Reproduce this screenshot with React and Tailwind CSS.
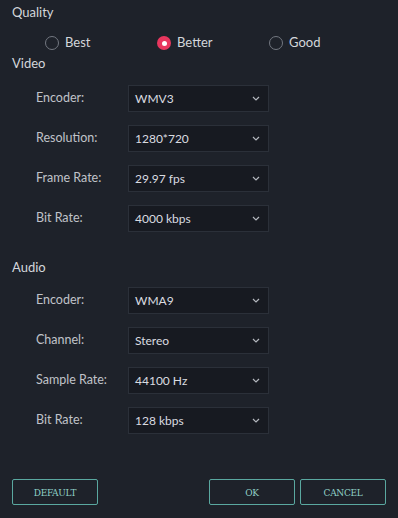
import { useState } from 'react';

const Chevron = () => (
    <svg width="8" height="5" viewBox="0 0 8 5" className="shrink-0 mr-[2px]">
        <polyline points="1,1 4,4 7,1" fill="none" stroke="#b5b9bf" strokeWidth="1.2" />
    </svg>
);

const Select = ({ label, value }) => (
    <div className="flex items-center pl-6 h-[27px]">
        <span className="w-[92px] text-[12.5px] text-[#c0c3c9]">{label}</span>
        <div className="w-[141px] h-[27px] bg-[#171a21] border border-[#2b3039] flex items-center justify-between pl-[6px] pr-[6px]">
            <span className="text-[12px] text-[#dadce0]">{value}</span>
            <Chevron />
        </div>
    </div>
);

const Radio = ({ label, checked, onClick }) => (
    <button onClick={onClick} className="w-[112px] flex items-center gap-[6px]">
        {checked ? (
            <span className="w-[14px] h-[14px] rounded-full bg-[#e8365e] flex items-center justify-center">
                <span className="w-[5px] h-[5px] rounded-full bg-white" />
            </span>
        ) : (
            <span className="w-[14px] h-[14px] rounded-full border border-[#737881]" />
        )}
        <span className="text-[13px] text-[#d3d6db]">{label}</span>
    </button>
);

const Btn = ({ children }) => (
    <button className="w-[86px] h-[26px] border border-[#5aa8a0] rounded-[2px] text-[10px] text-[#8fcfc6] font-['DejaVu_Serif',serif] font-stretch-condensed tracking-[-0.3px]">
        {children}
    </button>
);

export default function App() {
    const [quality, setQuality] = useState('Better');

    return (
        <div
            className="w-[398px] h-[518px] bg-[#1e222a] px-3 pb-[13px] flex flex-col"
            style={{ fontFamily: 'Lato, "Noto Sans", sans-serif' }}
        >
            {/* Quality */}
            <p className="mt-1 text-[13px] leading-4 text-[#d3d6db]">Quality</p>
            <div className="mt-[13px] h-5 flex items-center pl-[33px]">
                {['Best', 'Better', 'Good'].map((q) => (
                    <Radio key={q} label={q} checked={quality === q} onClick={() => setQuality(q)} />
                ))}
            </div>

            {/* Video */}
            <p className="mt-[2px] text-[13px] leading-4 text-[#d3d6db]">Video</p>
            <div className="mt-[14px] flex flex-col gap-[13px]">
                <Select label="Encoder:" value="WMV3" />
                <Select label="Resolution:" value="1280*720" />
                <Select label="Frame Rate:" value="29.97 fps" />
                <Select label="Bit Rate:" value="4000 kbps" />
            </div>

            {/* Audio */}
            <p className="mt-[27px] text-[13px] leading-4 text-[#d3d6db]">Audio</p>
            <div className="mt-[12px] flex flex-col gap-[13px]">
                <Select label="Encoder:" value="WMA9" />
                <Select label="Channel:" value="Stereo" />
                <Select label="Sample Rate:" value="44100 Hz" />
                <Select label="Bit Rate:" value="128 kbps" />
            </div>

            {/* Footer */}
            <div className="mt-auto flex items-center">
                <Btn>DEFAULT</Btn>
                <div className="ml-auto flex gap-[5px]">
                    <Btn>OK</Btn>
                    <Btn>CANCEL</Btn>
                </div>
            </div>
        </div>
    );
}
